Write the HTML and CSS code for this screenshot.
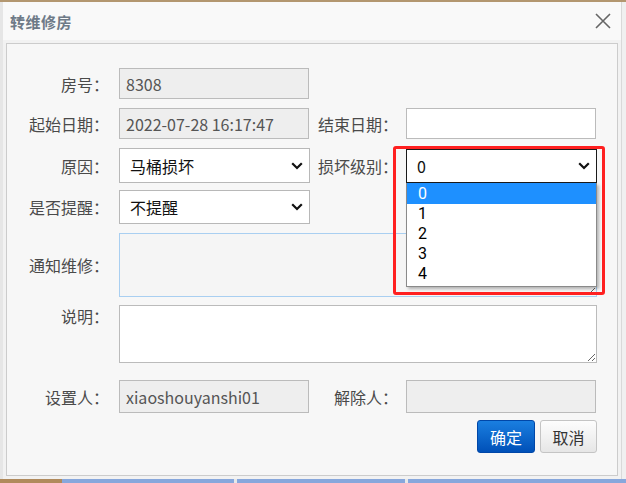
FILE: index.html
```html
<!DOCTYPE html>
<html lang="zh-CN">
<head>
<meta charset="utf-8">
<title>转维修房</title>
<link rel="stylesheet" href="styles.css">
</head>
<body>
<div class="screen">
  <div class="top-strip"></div>
  <div class="middle">
    <div class="left-edge"></div>
    <div class="dialog">
      <div class="titlebar">
        <span class="title">转维修房</span>
        <svg class="close" width="16" height="16" viewBox="0 0 16 16"><path d="M1 1 L15 15 M15 1 L1 15" stroke="#666" stroke-width="1.6" fill="none"/></svg>
      </div>
      <div class="panel">
        <div class="row r1">
          <label class="lbl">房号：</label>
          <input class="field ro" readonly value="8308">
        </div>
        <div class="row r2">
          <label class="lbl">起始日期：</label>
          <input class="field ro" readonly value="2022-07-28 16:17:47">
          <label class="lbl lbl2">结束日期：</label>
          <input class="field" value="">
        </div>
        <div class="row r3">
          <label class="lbl">原因：</label>
          <div class="select-wrap">
            <select class="sel h35"><option>马桶损坏</option></select>
            <svg class="chev" width="12" height="8" viewBox="0 0 12 8"><path d="M1.2 1.2 L6 6 L10.8 1.2" stroke="#111" stroke-width="2.2" fill="none"/></svg>
          </div>
          <label class="lbl lbl2">损坏级别：</label>
          <div class="select-wrap">
            <select class="sel h34 focused"><option>0</option></select>
            <svg class="chev" width="12" height="8" viewBox="0 0 12 8"><path d="M1.2 1.2 L6 6 L10.8 1.2" stroke="#111" stroke-width="2.2" fill="none"/></svg>
            <ul class="dropdown">
              <li class="active">0</li>
              <li>1</li>
              <li>2</li>
              <li>3</li>
              <li>4</li>
            </ul>
            <div class="redbox"></div>
          </div>
        </div>
        <div class="row r4">
          <label class="lbl">是否提醒：</label>
          <div class="select-wrap">
            <select class="sel h34"><option>不提醒</option></select>
            <svg class="chev" width="12" height="8" viewBox="0 0 12 8"><path d="M1.2 1.2 L6 6 L10.8 1.2" stroke="#111" stroke-width="2.2" fill="none"/></svg>
          </div>
        </div>
        <div class="row r5">
          <label class="lbl">通知维修：</label>
          <textarea class="area notify" readonly></textarea>
        </div>
        <div class="row r6">
          <label class="lbl top">说明：</label>
          <textarea class="area memo"></textarea>
        </div>
        <div class="row r7">
          <label class="lbl">设置人：</label>
          <input class="field ro h33" readonly value="xiaoshouyanshi01">
          <label class="lbl lbl2">解除人：</label>
          <input class="field ro h33" readonly value="">
        </div>
        <div class="row r8">
          <div class="buttons">
            <button class="btn primary">确定</button>
            <button class="btn">取消</button>
          </div>
        </div>
      </div>
    </div>
    <div class="right-edge"></div>
  </div>
  <div class="bottom-strip"></div>
</div>
</body>
</html>
```
FILE: styles.css
```css
* { box-sizing: border-box; }
html, body { margin: 0; padding: 0; }
body {
  width: 626px;
  height: 483px;
  overflow: hidden;
  background: #eceef0;
  font-family: "Noto Sans CJK SC", "Noto Sans", sans-serif;
}
.screen { display: flex; flex-direction: column; height: 483px; }
.top-strip { height: 2px; background: #b39770; }
.middle { display: flex; height: 477px; }
.left-edge { width: 3px; background: #e6e6e6; }
.right-edge { flex: 1; background: #f0f0f0; border-left: 1px solid #d9d9d9; }
.bottom-strip {
  height: 4px;
  background: linear-gradient(to right, #b08a5c 0, #b08a5c 62px, #87a7dc 62px, #87a7dc 234px, #e8e8e8 234px, #e8e8e8 237px, #87a7dc 237px, #87a7dc 405px, #e8e8e8 405px, #e8e8e8 408px, #87a7dc 408px);
}
.dialog {
  width: 618px;
  display: flex;
  flex-direction: column;
  background: #f2f2f2;
}
.titlebar {
  height: 38px;
  flex: none;
  background: #f9f9f9;
  display: flex;
  align-items: center;
  justify-content: space-between;
  padding: 0 10px 0 7px;
}
.title {
  font-size: 15px;
  font-weight: bold;
  color: #6e7a87;
  letter-spacing: 0.5px;
}
.close { display: block; }
.panel {
  position: relative;
  flex: 1;
  margin: 3px 3px 3px 3px;
  border: 1px solid #cccccc;
  background: #f7f7f7;
  padding-top: 24px;
  display: flex;
  flex-direction: column;
}
.row {
  display: grid;
  grid-template-columns: 112px 190px 97px 190px;
  align-items: center;
}
.r2, .r3, .r5 { margin-top: 9px; }
.r4 { margin-top: 7px; }
.r6 { margin-top: 8px; }
.r7 { margin-top: 17px; }
.r8 { margin-top: 7px; }
.lbl {
  font-size: 16px;
  color: #4a4a4a;
  text-align: right;
  padding-right: 10px;
  white-space: nowrap;
}
.lbl.lbl2 { padding-right: 8px; }
.lbl.top { align-self: start; line-height: 22px; }
.field {
  display: block;
  width: 190px;
  height: 31px;
  border: 1px solid #bbbbbb;
  background: #ffffff;
  font-family: inherit;
  font-size: 16px;
  color: #555;
  padding: 0 6px;
  margin: 0;
  outline: none;
}
.field.ro { background: #eeeeee; }
.field.h33 { height: 33px; }
.select-wrap { position: relative; width: 191px; }
.sel {
  display: block;
  appearance: none;
  -webkit-appearance: none;
  width: 191px;
  border: 1px solid #b8b8b8;
  background: #ffffff;
  font-family: inherit;
  font-size: 16px;
  color: #111;
  padding: 0 0 0 10px;
  margin: 0;
  outline: none;
}
.sel.h35 { height: 35px; }
.sel.h34 { height: 34px; }
.sel.focused { border-color: #1a1a1a; }
.chev {
  position: absolute;
  right: 7px;
  top: 50%;
  margin-top: -4px;
  pointer-events: none;
}
.dropdown {
  position: absolute;
  left: 0;
  top: 34px;
  width: 191px;
  margin: 0;
  padding: 0 0 2px 0;
  list-style: none;
  background: #ffffff;
  border: 1px solid #8a8a8a;
  border-top: none;
  box-shadow: 2px 2px 3px rgba(0, 0, 0, 0.28);
  z-index: 5;
}
.dropdown li {
  height: 20px;
  line-height: 20px;
  padding-left: 11px;
  font-family: Roboto, "Noto Sans", sans-serif;
  font-size: 16px;
  color: #000;
}
.dropdown li.active {
  height: 21px;
  line-height: 21px;
  background: #1e90ff;
  color: #ffffff;
}
.redbox {
  position: absolute;
  left: -13px;
  top: -3px;
  width: 212px;
  height: 149px;
  border: 3px solid #ff2020;
  border-radius: 3px;
  z-index: 6;
  pointer-events: none;
}
.area {
  display: block;
  grid-column: 2 / 5;
  width: 478px;
  margin: 0;
  font-family: inherit;
  font-size: 15px;
  outline: none;
}
.notify {
  height: 64px;
  border: 1px solid #a9cff1;
  background: #f5f5f5;
}
.memo {
  height: 58px;
  border: 1px solid #bbbbbb;
  background: #ffffff;
}
.buttons {
  grid-column: 1 / 5;
  display: flex;
  justify-content: flex-end;
  gap: 5px;
  padding-right: 0;
  width: 590px;
}
.btn {
  height: 33px;
  padding: 0;
  font-family: inherit;
  font-size: 16px;
  border-radius: 3px;
  width: 57px;
  border: 1px solid #c4c4c4;
  background: linear-gradient(to bottom, #fdfdfd, #e6e6e6);
  color: #333;
}
.btn.primary {
  width: 58px;
  border-color: #0047a8;
  background: linear-gradient(to bottom, #1a7fe0, #0050b8);
  color: #ffffff;
}
```
